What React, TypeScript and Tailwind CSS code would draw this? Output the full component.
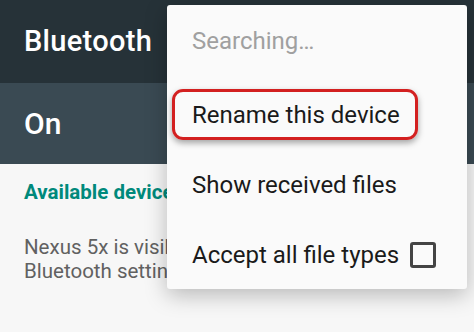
import React from "react";

export default function App() {
  return (
    <div className="relative w-[474px] h-[332px] overflow-hidden bg-[#f7f7f7]" style={{ fontFamily: "Roboto, 'Noto Sans', sans-serif" }}>
      <div className="h-[83px] bg-[#263238] flex items-center pl-[24px]">
        <span className="text-white text-[29px] font-medium leading-none tracking-[0.3px]">Bluetooth</span>
      </div>
      <div className="h-[81px] bg-[#3a4a53] flex items-center pl-[24px]">
        <span className="text-white text-[30px] font-medium leading-none">On</span>
      </div>
      <div className="pl-[24px] pt-[15px] w-[167px] overflow-hidden whitespace-nowrap">
        <div className="text-[#00897b] text-[20.5px] font-bold leading-[26px]">Available devices</div>
        <div className="mt-[30px] text-[#616161] text-[20.5px] leading-[24px]">
          Nexus 5x is visible to nearby devices while
          <br />
          Bluetooth settings is open.
        </div>
      </div>

      <div className="absolute left-[167px] top-[5px] w-[300px] h-[284px] bg-[#fafafa] rounded-[3px] shadow-[0_6px_22px_rgba(0,0,0,0.26)] flex flex-col pl-[25px]">
        <div className="h-[75px] flex items-center pb-[2px] text-[#a0a0a0] text-[24px]">Searching…</div>
        <div className="h-[70px] flex items-center">
          <div className="relative -ml-[20px] pl-[17px] w-[246px] h-[51px] flex items-center border-[3px] border-[#d32020] rounded-[11px] shadow-[0_3px_6px_rgba(0,0,0,0.35)] text-[#1a1a1a] text-[24px]">
            Rename this device
          </div>
        </div>
        <div className="h-[72px] flex items-center text-[#1a1a1a] text-[24px]">Show received files</div>
        <div className="h-[68px] flex items-center text-[#1a1a1a] text-[24px]">
          <span>Accept all file types</span>
          <span className="ml-[11px] w-[26px] h-[26px] border-[3px] border-[#444] rounded-[3px]" />
        </div>
      </div>
    </div>
  );
}
